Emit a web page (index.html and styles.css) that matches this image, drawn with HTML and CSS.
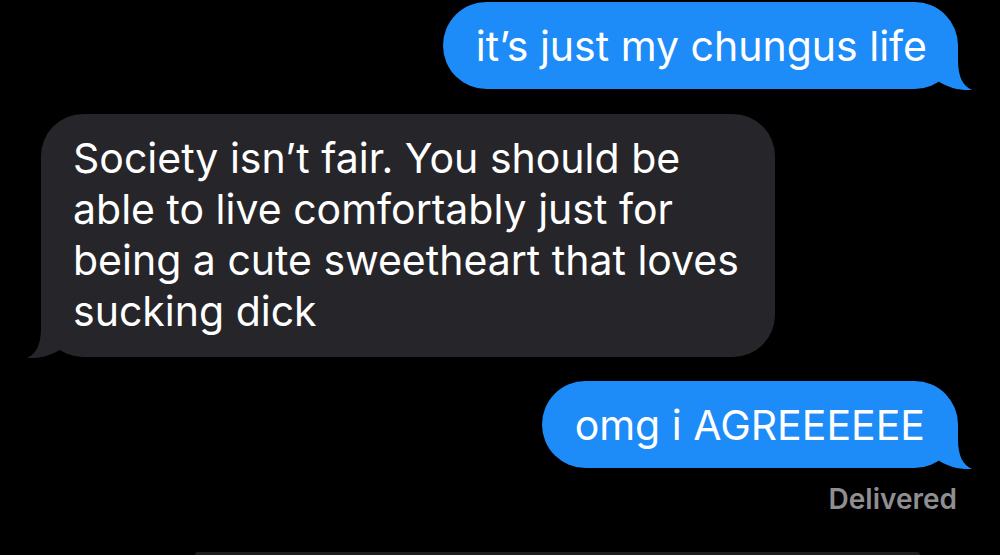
FILE: index.html
```html
<!DOCTYPE html>
<html lang="en">
<head>
  <meta charset="UTF-8" />
  <meta name="viewport" content="width=device-width, initial-scale=1.0"/>
  <title>Messages</title>
  <link rel="stylesheet" href="styles.css">
</head>
<body>

  <!-- conversation -->
  <div class="thread">
    <div class="bubble sent first">it’s just my chungus life</div>

    <div class="bubble received">Society isn’t fair. You should be able to live comfortably just for being a cute sweetheart that loves sucking dick</div>

    <div class="bubble sent last">omg i AGREEEEEE</div>
    <div class="status">Delivered</div>

    <div class="composer"></div>
  </div>

</body>
</html>
```

FILE: styles.css
```css
* { margin: 0; padding: 0; box-sizing: border-box; }
body {
  background: #000;
  height: 100vh;
  overflow: hidden;
  font-family: 'Inter', 'Liberation Sans', sans-serif;
  color: #fff;
}

.thread {
  display: flex;
  flex-direction: column;
  height: 100vh;
  padding: 2px 42px 0 41px;
}

.bubble {
  position: relative;
  font-size: 41px;
}
/* tail */
.bubble::after {
  content: "";
  position: absolute;
  bottom: -1px;
  width: 34px;
  height: 46px;
  clip-path: path('M20,0 L20,16 C20,33 25,42 34,46 C24,47 10,44 0,37 L0,0 Z');
}

.sent {
  align-self: flex-end;
  background: #1d8bf8;
  border-radius: 44px;
  padding: 20px 31px 19px 33px;
  line-height: 48px;
}
.sent::after { right: -14px; background: #1d8bf8; }

.received {
  align-self: flex-start;
  width: 734px;
  margin-top: 25px;
  background: #26252a;
  border-radius: 42px;
  padding: 19px 27px 20px 32px;
  line-height: 51px;
}
.received::after { left: -14px; background: #26252a; transform: scaleX(-1); }

.sent.last {
  margin-top: 24px;
  padding-left: 33px;
  padding-right: 33px;
}

.status {
  align-self: flex-end;
  margin: 14px 1px 0 0;
  font-size: 28px;
  font-weight: 600;
  color: #8e8e93;
}

.composer {
  margin: auto 0 0 154px;
  width: 725px;
  height: 3px;
  background: #1c1c1e;
  border-radius: 3px 3px 0 0;
}
```
